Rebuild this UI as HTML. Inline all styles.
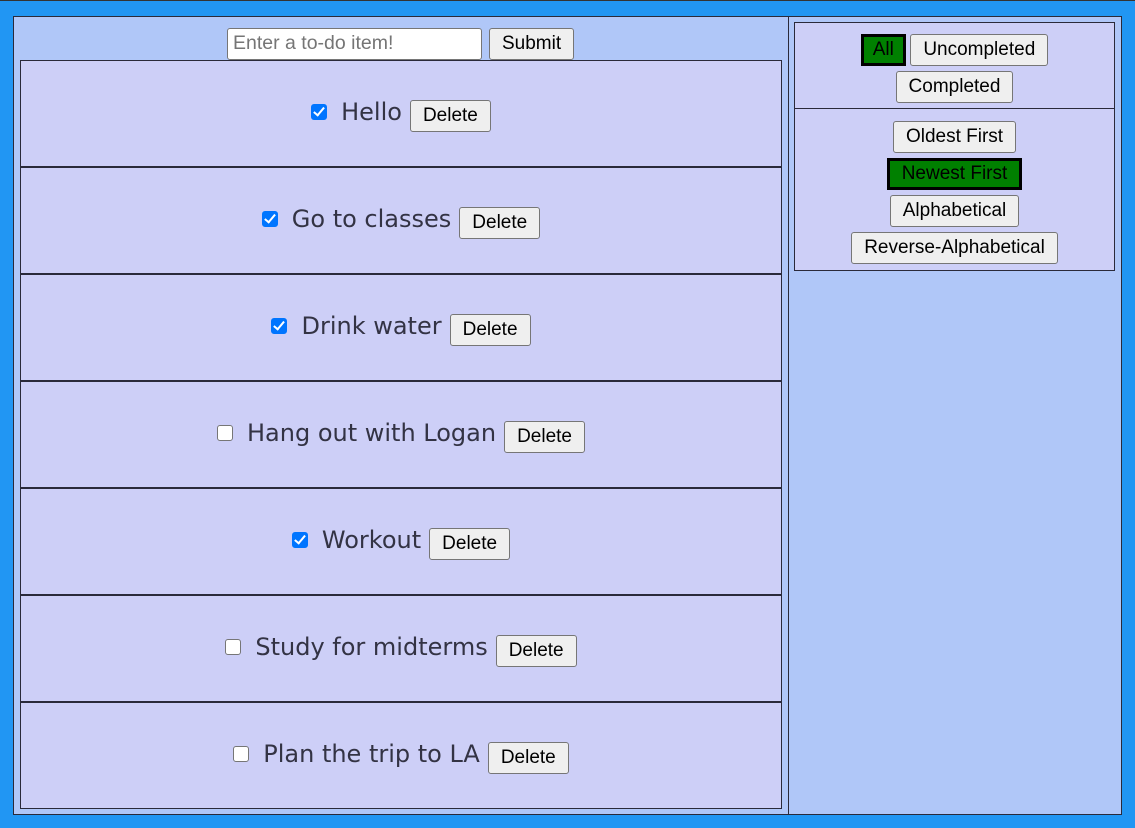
<!DOCTYPE html>
<html><head><style>
*{box-sizing:border-box}
body{margin:0;width:1135px;height:828px;background:#2196f3;box-shadow:inset 0 1px 0 #333;position:relative;overflow:hidden;font-family:"Liberation Sans",sans-serif}
.left{position:absolute;left:13px;top:16px;width:776px;height:799px;background:#b0c7f8;border:1px solid #2a2a3a}
.right{position:absolute;left:788px;top:16px;width:334px;height:799px;background:#b0c7f8;border:1px solid #2a2a3a}
button{font-family:"Liberation Sans",sans-serif;font-size:19px;background:#efefef;border:1px solid #767676;border-radius:3px;padding:0 12px;height:32px;color:#000}
button.on{background:#008000;border:3px solid #000;border-radius:0}
.inp{position:absolute;left:227px;top:28px;width:255px;height:32px;background:#fff;border:1px solid #767676;border-radius:3px;font-size:19.5px;color:#757575;padding:3px 5px}
.sub{position:absolute;left:489px;top:28px}
.list{position:absolute;left:20px;top:60px;width:762px;height:749px;border:1px solid #2a2a3a;border-top:none}
.row{height:107px;background:#cdcff7;border-top:1px solid #2a2a3a;border-bottom:1px solid #2a2a3a;display:flex;align-items:center;justify-content:center}
.cb{width:16px;height:16px;border:1px solid #767676;border-radius:3px;background:#fff;margin-right:14px;margin-top:-4px}
.cb.c{background:#0075ff;border-color:#0075ff;position:relative}
.cb.c:after{content:"";position:absolute;left:4px;top:0px;width:4px;height:9px;border:solid #fff;border-width:0 2.5px 2.5px 0;transform:rotate(40deg)}
.t{font-family:"DejaVu Sans",sans-serif;font-size:24px;color:#333344;margin-right:8px;margin-top:-3px}
.row button{margin-top:5px}
.box{position:absolute;left:794px;width:321px;background:#cdcff7;border:1px solid #2a2a3a;text-align:center}
</style></head><body>
<div class="left"></div>
<div class="right"></div>
<div class="inp">Enter a to-do item!</div>
<button class="sub">Submit</button>
<div class="list">
<div class="row"><span class="cb c"></span><span class="t">Hello</span><button>Delete</button></div>
<div class="row"><span class="cb c"></span><span class="t">Go to classes</span><button>Delete</button></div>
<div class="row"><span class="cb c"></span><span class="t">Drink water</span><button>Delete</button></div>
<div class="row"><span class="cb"></span><span class="t">Hang out with Logan</span><button>Delete</button></div>
<div class="row"><span class="cb c"></span><span class="t">Workout</span><button>Delete</button></div>
<div class="row"><span class="cb"></span><span class="t">Study for midterms</span><button>Delete</button></div>
<div class="row"><span class="cb"></span><span class="t">Plan the trip to LA</span><button>Delete</button></div>
</div>
<div class="box" style="top:22px;height:87px;padding-top:11px">
<button class="on" style="padding:0 9px">All</button> <button>Uncompleted</button><br>
<button style="margin-top:5px">Completed</button>
</div>
<div class="box" style="top:108px;height:163px;padding-top:12px">
<button>Oldest First</button><br>
<button class="on" style="margin-top:5px">Newest First</button><br>
<button style="margin-top:5px">Alphabetical</button><br>
<button style="margin-top:5px">Reverse-Alphabetical</button>
</div>
</body></html>
